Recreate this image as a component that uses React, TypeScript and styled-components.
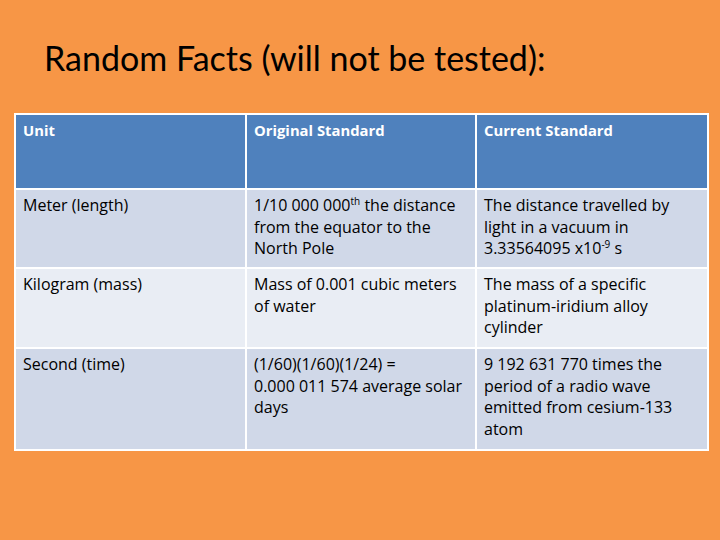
import styled, { createGlobalStyle } from 'styled-components'

const GlobalStyle = createGlobalStyle`
  html, body {
    margin: 0;
    padding: 0;
    background: #f79646;
  }
`

type Row = {
  unit: string
  original: React.ReactNode
  current: React.ReactNode
}

const rows: Row[] = [
  {
    unit: 'Meter (length)',
    original: (
      <>
        1/10 000 000<sup>th</sup> the distance from the equator to the North Pole
      </>
    ),
    current: (
      <>
        The distance travelled by light in a vacuum in 3.33564095 x10<sup>-9</sup> s
      </>
    ),
  },
  {
    unit: 'Kilogram (mass)',
    original: 'Mass of 0.001 cubic meters of water',
    current: 'The mass of a specific platinum-iridium alloy cylinder',
  },
  {
    unit: 'Second (time)',
    original: (
      <>
        (1/60)(1/60)(1/24) =<br />
        0.000 011 574 average solar days
      </>
    ),
    current: '9 192 631 770 times the period of a radio wave emitted from cesium-133 atom',
  },
]

const heights = [79, 80, 102]

export default function App() {
  return (
    <Slide>
      <GlobalStyle />
      <Title>Random Facts (will not be tested):</Title>
      <Table>
        <colgroup>
          <col style={{ width: 231 }} />
          <col style={{ width: 230 }} />
          <col style={{ width: 232 }} />
        </colgroup>
        <thead>
          <tr>
            <HeadCell>Unit</HeadCell>
            <HeadCell>Original Standard</HeadCell>
            <HeadCell>Current Standard</HeadCell>
          </tr>
        </thead>
        <tbody>
          {rows.map((r, i) => (
            <BodyRow key={r.unit} $odd={i % 2 === 0} style={{ height: heights[i] }}>
              <Cell>{r.unit}</Cell>
              <Cell>{r.original}</Cell>
              <Cell>{r.current}</Cell>
            </BodyRow>
          ))}
        </tbody>
      </Table>
    </Slide>
  )
}

const Slide = styled.div`
  width: 720px;
  height: 540px;
  background: #f79646;
  padding: 36px 0 0 14px;
  box-sizing: border-box;
  font-family: 'Open Sans', 'Noto Sans', sans-serif;
`

const Title = styled.h1`
  margin: 0 0 0 30px;
  font-family: Lato, sans-serif;
  font-weight: 400;
  font-size: 34px;
  line-height: 44px;
  color: #000;
  height: 77px;
`

const Table = styled.table`
  border-collapse: collapse;
  table-layout: fixed;
  width: 695px;
  border: 2px solid #fff;
`

const HeadCell = styled.th`
  background: #4f81bd;
  color: #fff;
  text-align: left;
  vertical-align: top;
  font-weight: 700;
  font-size: 14.8px;
  line-height: 21px;
  height: 75px;
  padding: 5px 7px;
  box-sizing: border-box;
  border: 2px solid #fff;
`

const BodyRow = styled.tr<{ $odd: boolean }>`
  background: ${(p) => (p.$odd ? '#d0d8e8' : '#e9edf4')};
`

const Cell = styled.td`
  vertical-align: top;
  font-size: 16px;
  line-height: 21.6px;
  color: #000;
  padding: 5px 7px;
  border: 2px solid #fff;

  sup {
    font-size: 10px;
    line-height: 0;
    vertical-align: 6px;
  }
`
